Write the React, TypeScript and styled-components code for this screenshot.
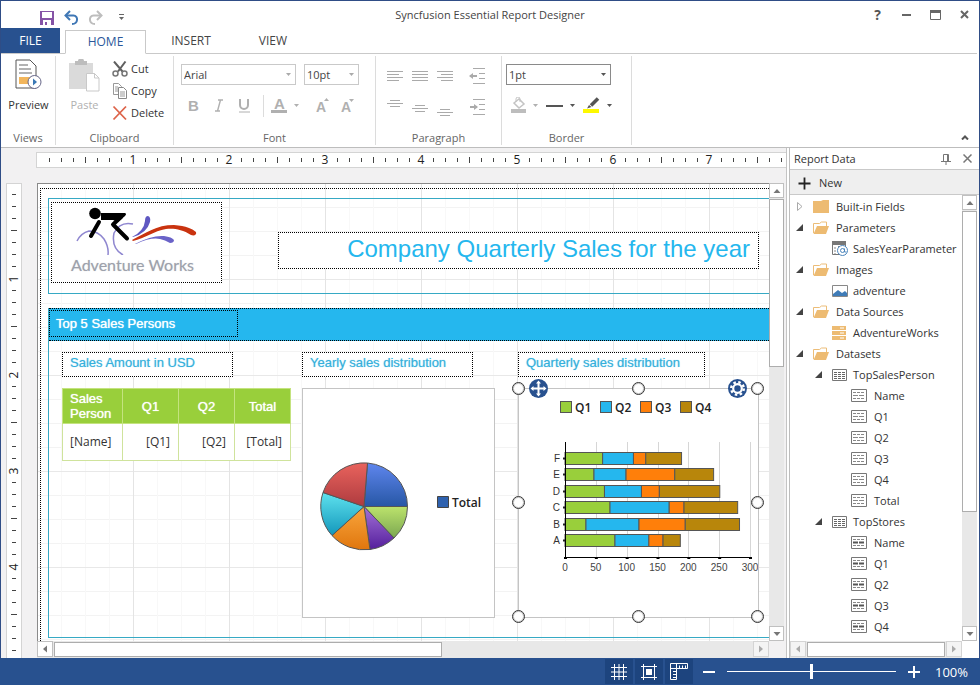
import React, { useLayoutEffect, useRef, useState } from "react";
import styled, { createGlobalStyle, css } from "styled-components";

const UI_FONT = '"Open Sans", "Noto Sans", sans-serif';
const REPORT_FONT = '"Liberation Sans", Arial, sans-serif';

const color = {
  brand: "#28518f",
  brandDark: "#1d447e",
  frame: "#2f4d86",
  line: "#c9c9c9",
  text: "#333333",
  muted: "#666666",
  disabled: "#b0b0b0",
  canvas: "#f2f1f2",
  cyan: "#25b7ee",
  cyanText: "#35b0dc",
  cyanLine: "#36a9c4",
  green: "#99cf3b",
  orange: "#ff7f0a",
  gold: "#b8860b",
};

const GlobalStyle = createGlobalStyle`
  *, *::before, *::after { box-sizing: border-box; }
  body { margin: 0; background: #fff; }
  button, select, input { font: inherit; color: inherit; margin: 0; padding: 0; }
  button { background: none; border: 0; cursor: default; }
  svg { flex: none; }
`;

/* ---------- window frame ---------- */

const Window = styled.div`
  display: flex;
  flex-direction: column;
  height: 100vh;
  border: 1px solid ${color.frame};
  border-bottom: 0;
  background: #fff;
  color: ${color.text};
  font: 11px/16px ${UI_FONT};
`;

const TitleBar = styled.header`
  display: grid;
  grid-template-columns: 1fr auto 1fr;
  align-items: center;
  height: 27px;
`;

const QuickAccess = styled.div`
  display: flex;
  align-items: center;
  gap: 8px;
  padding: 5px 0 0 38px;
`;

const IconButton = styled.button`
  display: flex;
  align-items: center;
  justify-content: center;
  width: 16px;
  height: 16px;
  flex: none;
`;

const WindowTitle = styled.h1`
  margin: 0;
  padding-top: 1px;
  font-size: 11px;
  font-weight: 400;
  line-height: 16px;
  color: #444;
`;

const WindowButtons = styled.div`
  display: flex;
  justify-content: flex-end;
`;

const WindowButton = styled.button`
  display: flex;
  align-items: center;
  justify-content: center;
  width: 29px;
  height: 27px;
  font-size: 14px;
  font-weight: 700;
  color: #555;
`;

/* ---------- ribbon ---------- */

const TabStrip = styled.nav`
  display: flex;
  align-items: flex-end;
  height: 26px;
  margin-right: 2px;
  border-bottom: 1px solid ${color.line};
  font-size: 12px;
`;

const FileTab = styled.button`
  width: 59px;
  height: 25px;
  color: #fff;
  background: ${color.brand};
`;

const Tab = styled.button<{ $active?: boolean; $width: number }>`
  width: ${(p) => p.$width}px;
  height: 24px;
  color: #444;
  ${(p) =>
    p.$active &&
    css`
      margin: 0 0 -1px 5px;
      color: #2b579a;
      background: #fff;
      border: 1px solid ${color.line};
      border-bottom-color: #fff;
    `}
`;

const Ribbon = styled.section`
  display: flex;
  height: 94px;
  padding: 2px 0;
  border-bottom: 1px solid #bdbdbd;
`;

const RibbonGroup = styled.div<{ $width: number }>`
  display: flex;
  flex-direction: column;
  width: ${(p) => p.$width}px;
  border-right: 1px solid #dcdcdc;
`;

const GroupBody = styled.div`
  display: flex;
  flex: 1;
  min-height: 0;
`;

const GroupLabel = styled.div`
  height: 14px;
  line-height: 14px;
  text-align: center;
  color: ${color.muted};
`;

const BigButton = styled.button<{ $width: number }>`
  display: flex;
  flex-direction: column;
  align-items: center;
  gap: 7px;
  width: ${(p) => p.$width}px;
  padding: 3px 0 0 1px;
  line-height: 16px;
  white-space: nowrap;
  &:disabled { color: ${color.disabled}; gap: 5px; }
`;

const CommandList = styled.div`
  display: flex;
  flex-direction: column;
  padding-top: 2px;
`;

const CommandButton = styled.button`
  display: flex;
  align-items: center;
  gap: 3px;
  height: 22px;
`;

const Rows = styled.div`
  display: flex;
  flex-direction: column;
  gap: 10px;
  padding: 8px 0 0 4px;
`;

const FontRows = styled(Rows)`
  padding-left: 7px;
`;

const Row = styled.div<{ $gap?: number }>`
  display: flex;
  align-items: center;
  gap: ${(p) => p.$gap ?? 8}px;
  height: 21px;
`;

const SelectBox = styled.label<{ $width: number; $active?: boolean }>`
  display: flex;
  align-items: center;
  width: ${(p) => p.$width}px;
  height: 21px;
  padding-right: 4px;
  border: 1px solid ${(p) => (p.$active ? "#8a8a8a" : "#c9c9c9")};
  color: ${(p) => (p.$active ? "#555" : "#aaa")};
  select {
    flex: 1;
    min-width: 0;
    height: 19px;
    padding-left: 2px;
    appearance: none;
    border: 0;
    background: transparent;
    color: #444;
  }
`;

const ToolButton = styled.button<{ $width?: number }>`
  display: flex;
  align-items: center;
  justify-content: center;
  width: ${(p) => p.$width ?? 25}px;
  height: 24px;
  flex: none;
  color: ${color.disabled};
`;

const ToolDivider = styled.span`
  width: 1px;
  height: 22px;
  margin: 0 4px 0 7px;
  background: #dcdcdc;
`;

const AlignGrid = styled.div`
  display: grid;
  grid-template-columns: 25px 25px 25px 41px;
  grid-auto-rows: 31px;
  padding: 4px 0 0 6px;
  button { width: auto; height: 31px; }
`;

const RibbonEnd = styled.div`
  display: flex;
  flex: 1;
  align-items: flex-end;
  justify-content: flex-end;
  padding: 0 6px 0 0;
`;

/* ---------- workspace ---------- */

const Workspace = styled.main`
  display: flex;
  flex: 1;
  min-height: 0;
  gap: 2px;
`;

const Designer = styled.section`
  display: flex;
  flex: 1;
  flex-direction: column;
  min-width: 0;
  padding-left: 5px;
  background: ${color.canvas};
  border-right: 1px solid #c4c4c4;
`;

const rulerSkin = css`
  display: flex;
  flex: none;
  overflow: hidden;
  background: #fff;
  border: 1px solid #d4d4d4;
  color: #222;
  font-size: 12px;
`;

const HRulerTrack = styled.div`
  ${rulerSkin}
  height: 16px;
  margin: 4px 0 15px 30px;
  padding-left: 6px;
  border-right: 0;
`;

const VRulerTrack = styled.div`
  ${rulerSkin}
  flex-direction: column;
  width: 16px;
  padding-top: 5px;
  margin-right: 15px;
  border-bottom: 0;
`;

const Tick = styled.span<{ $tall?: boolean }>`
  display: flex;
  flex: none;
  align-items: center;
  justify-content: center;
  &:empty::before {
    content: "";
    width: 1px;
    height: ${(p) => (p.$tall ? 6 : 4)}px;
    background: #444;
  }
`;

const HTick = styled(Tick)`
  width: 12px;
  height: 14px;
`;

const VTick = styled(Tick)`
  width: 14px;
  height: 12px;
  line-height: 12px;
  transform: rotate(-90deg);
`;

const DesignerBody = styled.div`
  display: flex;
  flex: 1;
  min-height: 0;
`;

const Viewport = styled.div`
  display: grid;
  flex: 1;
  min-width: 0;
  grid-template-columns: minmax(0, 1fr) 15px 2px;
  grid-template-rows: minmax(0, 1fr) 17px;
`;

const gridLines = css`
  background-color: #fff;
  background-image: linear-gradient(90deg, #e4e4e4 1px, transparent 1px),
    linear-gradient(#e8e8e8 1px, transparent 1px),
    linear-gradient(90deg, #f8f8f8 1px, transparent 1px),
    linear-gradient(#f3f3f3 1px, transparent 1px);
  background-size: 96px 96px, 96px 96px, 24px 24px, 24px 24px;
  background-position: -1px -1px;
`;

const Page = styled.div`
  overflow: hidden;
  padding: 4px 0 0 2px;
  border-top: 1px solid #8a8a8a;
  border-left: 1px solid #8a8a8a;
  ${gridLines}
`;

const PageMargin = styled.div`
  min-height: 100%;
  padding: 9px 0 0 7px;
  border-top: 1px dotted #000;
  border-left: 1px dotted #000;
`;

const HeaderSection = styled.div`
  position: relative;
  height: 96px;
  margin-bottom: 14px;
  border: 1px solid ${color.cyanLine};
  border-right: 0;
`;

const BodySection = styled.div`
  position: relative;
  height: 330px;
  border: 1px solid ${color.cyanLine};
  border-width: 0 0 1px 1px;
`;

const Band = styled.div`
  height: 33px;
  padding: 1px 0 0;
  background: ${color.cyan};
  border: 1px dotted #000;
  border-right: 0;
  border-left: 0;
`;

const BandTitle = styled.div`
  width: 189px;
  height: 27px;
  padding: 5px 6px;
  border: 1px dotted #000;
  color: #fff;
  font: 13px/15px ${REPORT_FONT};
  text-shadow: 0 0 1px currentColor;
`;

/* Report items carry their own place on the design canvas. */
const ReportItem = styled.div<{ $x: number; $y: number; $w: number; $h: number }>`
  position: absolute;
  left: ${(p) => p.$x}px;
  top: ${(p) => p.$y}px;
  width: ${(p) => p.$w}px;
  height: ${(p) => p.$h}px;
`;

const LogoItem = styled(ReportItem)`
  background: #fff;
  border: 1px dotted #000;
  padding: 2px 0 0 19px;
  color: #9da1ab;
  font: 16px/20px Lato, ${UI_FONT};
  white-space: nowrap;
  text-shadow: 0 0 1px #9da1ab80;
  svg { display: block; }
`;

const TextItem = styled(ReportItem)`
  background: #fff;
  padding: 2px 7px;
  border: 1px dotted #000;
  color: ${color.cyanText};
  font: 13px/15px ${REPORT_FONT};
  text-shadow: 0 0 1px #35b0dc99;
`;

const TitleItem = styled(TextItem)`
  padding: 2px 8px;
  font-size: 24px;
  line-height: 28px;
  text-align: right;
  white-space: nowrap;
  color: ${color.cyan};
  text-shadow: none;
`;

const ChartItem = styled(ReportItem)`
  background: #fff;
  border: 1px solid #c4c4c4;
  svg { display: block; }
`;

const Tablix = styled.table`
  width: 100%;
  height: 100%;
  table-layout: fixed;
  border-collapse: collapse;
  background: #fff;
  font-size: 12px;
  th {
    height: 35px;
    padding: 0 7px;
    border: 1px solid #c4e37f;
    background: ${color.green};
    color: #fff;
    font: 13px/15px ${REPORT_FONT};
    text-shadow: 0 0 1px currentColor;
  }
  th:first-child, td:first-child { text-align: left; }
  th:first-child { width: 60px; }
  td {
    padding: 0 8px 0 7px;
    border: 1px solid #cfe39c;
    text-align: right;
  }
`;

const Handle = styled.i<{ $left: string; $top: string }>`
  position: absolute;
  left: ${(p) => p.$left};
  top: ${(p) => p.$top};
  width: 13px;
  height: 13px;
  margin: -7px 0 0 -7px;
  border: 1px solid #333;
  border-radius: 50%;
  background: #fff;
  box-shadow: inset 0 0 0 1px #3334;
`;

const Adorner = styled.button<{ $left: string }>`
  position: absolute;
  left: ${(p) => p.$left};
  top: -10px;
  width: 19px;
  height: 19px;
`;

/* ---------- scroll bars ---------- */

const ScrollBar = styled.div<{ $vertical?: boolean }>`
  display: flex;
  flex-direction: ${(p) => (p.$vertical ? "column" : "row")};
  background: #e8e8e8;
`;

const ScrollButton = styled.button`
  display: flex;
  flex: none;
  align-items: center;
  justify-content: center;
  width: 16px;
  height: 16px;
  background: #fff;
  border: 1px solid #c0c0c0;
  color: #777;
  &:disabled { color: #aaa; background: #f4f4f4; border-color: #d4d4d4; }
`;

const VScrollButton = styled(ScrollButton)`
  width: auto;
  height: 15px;
`;

const Thumb = styled.div<{ $share: number }>`
  flex: ${(p) => p.$share} 0 0;
  margin: 1px;
  background: #fff;
  border: 1px solid #adadad;
`;

const VThumb = styled(Thumb)`
  margin: 1px 0;
`;

const Remaining = styled.div<{ $share: number }>`
  flex: ${(p) => p.$share} 0 0;
`;

/* ---------- report data panel ---------- */

const Panel = styled.aside`
  display: flex;
  flex: none;
  flex-direction: column;
  width: 190px;
  border-left: 1px solid #bdbdbd;
`;

const PanelHeader = styled.div`
  display: flex;
  align-items: center;
  height: 22px;
  padding: 0 4px;
  border-bottom: 1px solid ${color.line};
  gap: 5px;
  h2 {
    flex: 1;
    margin: 0;
    font-size: 11px;
    font-weight: 400;
  }
`;

const PanelToolbar = styled.div`
  height: 25px;
  padding: 5px 8px 3px;
  background: #efefef;
  border-bottom: 1px solid ${color.line};
`;

const NewButton = styled.button`
  display: flex;
  align-items: center;
  gap: 8px;
  height: 16px;
`;

const PanelBody = styled.div`
  display: grid;
  flex: 1;
  min-height: 0;
  grid-template-columns: minmax(0, 1fr) 15px 2px;
  grid-template-rows: minmax(0, 1fr) 17px;
`;

const Tree = styled.ul`
  margin: 0;
  padding: 1px 0 0;
  overflow: hidden;
  list-style: none;
`;

const TreeRow = styled.li<{ $level: number }>`
  display: flex;
  align-items: center;
  gap: ${(p) => (p.$level === 1 ? 5 : 7)}px;
  height: 21px;
  padding-left: ${(p) => 4 + p.$level * 19}px;
  white-space: nowrap;
`;

const TreeGlyphs = styled.span`
  display: flex;
  align-items: center;
`;

const Expander = styled.span`
  display: flex;
  width: 19px;
  padding-left: 2px;
  flex: none;
`;

const TreeIcon = styled.span`
  display: flex;
  width: 16px;
  flex: none;
`;

/* ---------- status bar ---------- */

const StatusBar = styled.footer`
  display: flex;
  flex: none;
  align-items: center;
  justify-content: flex-end;
  height: 27px;
  margin: 0 -1px;
  padding-right: 11px;
  background: ${color.brand};
  color: #fff;
  font-size: 13px;
`;

const StatusToggles = styled.div`
  display: flex;
  gap: 2px;
  margin-right: 1px;
`;

const StatusToggle = styled.button`
  display: flex;
  align-items: center;
  justify-content: center;
  width: 28px;
  height: 25px;
  background: ${color.brandDark};
`;

const ZoomButton = styled.button`
  display: flex;
  align-items: center;
  justify-content: center;
  width: 12px;
  height: 16px;
  margin: 0 9px;
`;

const ZoomSlider = styled.input`
  width: 169px;
  height: 16px;
  margin: 0 3px;
  appearance: none;
  background: linear-gradient(#fff, #fff) center / 100% 1px no-repeat;
  &::-webkit-slider-thumb {
    appearance: none;
    width: 3px;
    height: 15px;
    background: #fff;
  }
`;

const ZoomValue = styled.output`
  min-width: 34px;
  margin-left: 6px;
`;

/* ---------- icons ---------- */

const Caret = () => (
  <svg width="5" height="3" viewBox="0 0 5 3" aria-hidden="true">
    <path d="M0 0h5L2.500 3z" fill="currentColor" />
  </svg>
);

const DarkCaret = () => (
  <svg width="5" height="3" viewBox="0 0 5 3" aria-hidden="true">
    <path d="M0 0h5L2.500 3z" fill="#555" />
  </svg>
);

const Arrow = ({ turn }: { turn: number }) => (
  <svg width="8" height="8" viewBox="0 0 8 8" aria-hidden="true">
    <path d="M0.500 6h7L4 2z" fill="currentColor" transform={`rotate(${turn} 4 4)`} />
  </svg>
);

const SaveIcon = () => (
  <svg width="15" height="15" viewBox="0 0 15 15">
    <path d="M0 1h14v14H0z" fill="#8553a6" />
    <path d="M2 2h10v6H2zM3 10h8v5H3z" fill="#fff" />
    <path d="M5 12h2v3H5z" fill="#8553a6" />
  </svg>
);

const UndoIcon = ({ stroke, flip }: { stroke: string; flip?: boolean }) => (
  <svg width="15" height="15" viewBox="0 0 15 15">
    <g fill="none" stroke={stroke} strokeWidth="2" transform={flip ? "matrix(-1 0 0 1 15 0)" : undefined}>
      <path d="M2 5.500h7.500c5 0 5 8.500-1.500 8.500" />
      <path d="M6 1L1.500 5.500 6 10" />
    </g>
  </svg>
);

const PreviewIcon = () => (
  <svg width="27" height="31" viewBox="0 0 27 31">
    <path d="M1 1h14l6 6v22H1z" fill="#fff" stroke="#555" />
    <path d="M4 6h9M4 10h12M4 14h13" stroke="#999" strokeWidth="1.500" />
    <path d="M4 18h13v7H4z" fill="#f2b65c" />
    <circle cx="19.500" cy="23" r="6.500" fill="#fff" stroke="#668" />
    <path d="M18 19.500v7l4-3.500z" fill="#3a78b5" />
  </svg>
);

const PasteIcon = () => (
  <svg width="31" height="33" viewBox="0 0 31 33">
    <path d="M0 4h24v26H0z" fill="#dadada" />
    <path d="M6 2h3a3 2.500 0 0 1 6 0h3v4H6z" fill="#bdbdbd" />
    <path d="M17.500 14.500h8l4.500 4.500v13H17.500z" fill="#fff" stroke="#c9c9c9" />
    <path d="M25.500 14.500V19H30" fill="none" stroke="#c9c9c9" />
  </svg>
);

const CutIcon = () => (
  <svg width="16" height="16" viewBox="0 0 16 16">
    <path d="M2 0.500l8.500 10M13.500 0.500L6 10.500" stroke="#606060" strokeWidth="2" />
    <circle cx="3.500" cy="12.500" r="2.500" fill="none" stroke="#777" strokeWidth="1.500" />
    <circle cx="12.500" cy="12.500" r="2.500" fill="none" stroke="#777" strokeWidth="1.500" />
  </svg>
);

const CopyIcon = () => (
  <svg width="16" height="16" viewBox="0 0 16 16">
    <path d="M1.500 0.500h5l3 3v8h-8z" fill="#fff" stroke="#999" />
    <path d="M3 4h3M3 6h3M3 8h3" stroke="#999" />
    <path d="M6.500 4.500h5l3 3v8h-8z" fill="#fff" stroke="#888" />
    <path d="M8 9h5M8 11h5M8 13h5" stroke="#999" />
  </svg>
);

const DeleteIcon = () => (
  <svg width="16" height="16" viewBox="0 0 16 16">
    <path d="M1.500 1.500l12.500 13M14 1.500L1.500 14.500" stroke="#dd6349" strokeWidth="1.800" />
  </svg>
);

const letter = { fontFamily: REPORT_FONT, fill: "currentColor" } as const;

const BoldIcon = () => (
  <svg width="14" height="20" viewBox="0 0 14 20">
    <text x="1" y="15" fontSize="15" fontWeight="700" {...letter}>B</text>
  </svg>
);
const ItalicIcon = () => (
  <svg width="14" height="16" viewBox="0 0 14 16">
    <path d="M6 2h5M3 13h5M8.500 2l-3 11" stroke="currentColor" fill="none" strokeWidth="1.400" />
  </svg>
);
const UnderlineIcon = () => (
  <svg width="14" height="16" viewBox="0 0 14 16">
    <path d="M3 1v6a4 4 0 0 0 8 0V1" fill="none" stroke="currentColor" strokeWidth="2" />
    <path d="M2 14h11" stroke="currentColor" />
  </svg>
);
const FontColorIcon = () => (
  <svg width="17" height="24" viewBox="0 0 17 24">
    <text x="3" y="15" fontSize="15" fontWeight="700" {...letter}>A</text>
    <path d="M0 16h16v3H0z" fill="currentColor" />
  </svg>
);
const FontSizeIcon = ({ grow }: { grow?: boolean }) => (
  <svg width="14" height="22" viewBox="0 0 14 22">
    <text x="0" y="17" fontSize="14" fontWeight="700" {...letter}>A</text>
    <path d={grow ? "M8 4h5l-2.500 3z" : "M8 6h5L10.500 3z"} fill="currentColor" />
  </svg>
);

const LinesIcon = ({ d, shift = 0 }: { d: string; shift?: number }) => (
  <svg width="16" height="24" viewBox="0 -2 16 24">
    <path d={d} stroke="#aaaaaa" fill="none" transform={`translate(0 ${shift})`} />
  </svg>
);

const IndentIcon = ({ out }: { out?: boolean }) => (
  <svg width="17" height="18" viewBox="0 0 17 18">
    <path d="M4 1.500h12M10 6.500h6M10 11.500h6M4 16.500h12" stroke="#aaa" />
    <path d="M1 9h7" stroke="#aaa" strokeWidth="2" />
    <path d={out ? "M0 9l4-3v6z" : "M9 9L5 6v6z"} fill="#aaa" />
  </svg>
);

const FillIcon = () => (
  <svg width="17" height="17" viewBox="0 0 17 17">
    <path d="M4 6l5-4 5 5-5 4z" fill="none" stroke="#c4c4c4" strokeWidth="1.500" />
    <path d="M6 5V2a2 2 0 0 1 4 0v3" fill="none" stroke="#c4c4c4" />
    <path d="M1 12h15v4H1z" fill="#bdbdbd" />
  </svg>
);
const PenIcon = () => (
  <svg width="17" height="17" viewBox="0 0 17 17">
    <path d="M8 8.500l7-7" stroke="#555" strokeWidth="3.500" />
    <path d="M4 11.500l2-3.500 2.500 2z" fill="#555" />
    <path d="M0 12h16v4H0z" fill="#fdf900" />
  </svg>
);

const ClosedFolder = () => (
  <svg width="16" height="13" viewBox="0 0 16 13">
    <path d="M0 1h8l2-1h6v13H0z" fill="#edbb72" />
  </svg>
);
const OpenFolder = () => (
  <svg width="16" height="13" viewBox="0 0 16 13">
    <path d="M0.500 12V2.500h6l2-1.500h5v4" fill="#fff" stroke="#ecbd78" />
    <path d="M4 5h12l-3 8H0.500z" fill="#edbb72" />
  </svg>
);
const ParameterIcon = () => (
  <svg width="16" height="15" viewBox="0 0 16 15">
    <path d="M0.500 0.500h13v13H0.500z" fill="#fff" stroke="#777" />
    <path d="M0 0h14v4H0z" fill="#777" />
    <path d="M3 6v7M6 5.500h8" stroke="#888" strokeDasharray="2 1" />
    <circle cx="10.500" cy="9.500" r="5" fill="#fff" stroke="#4d86bd" />
    <circle cx="10.500" cy="9.500" r="2" fill="none" stroke="#4d86bd" />
    <path d="M12.500 7.500v3.500h2" fill="none" stroke="#4d86bd" />
  </svg>
);
const ImageIcon = () => (
  <svg width="16" height="12" viewBox="0 0 16 12">
    <path d="M0.500 0.500h15v11H0.500z" fill="#fff" stroke="#888" />
    <path d="M1 9l5-4 4 3 3-2 2 2v3H1z" fill="#3f7cb8" />
  </svg>
);
const SourceIcon = () => (
  <svg width="16" height="14" viewBox="0 0 16 14">
    <path d="M0 0h14v4H0zM0 5h14v4H0zM0 10h14v4H0z" fill="#edbb72" />
    <path d="M8 2h4M8 7h4M8 12h4" stroke="#fff" />
  </svg>
);
const DatasetIcon = () => (
  <svg width="16" height="12" viewBox="0 0 16 12">
    <path d="M0.500 0.500h14v11H0.500z" fill="#fff" stroke="#777" />
    <path d="M2 3.500h3M6 3.500h3M10 3.500h3M2 5.500h3M6 5.500h3M10 5.500h3M2 7.500h3M6 7.500h3M10 7.500h3M2 9.500h3M6 9.500h3M10 9.500h3" stroke="#666" />
  </svg>
);
const FieldIcon = ({ bold }: { bold?: boolean }) => (
  <svg width="16" height="13" viewBox="0 0 16 13">
    <path d="M0.500 0.500h15v12H0.500z" fill="#fff" stroke="#777" />
    <path d="M2 3.500h12M2 9.500h12" stroke="#888" strokeDasharray="3 1" />
    <path d="M2 6.500h11" stroke={bold ? "#555" : "#888"} strokeWidth={bold ? 2 : 1} strokeDasharray="5 1" />
  </svg>
);

const Collapse = () => (
  <svg width="7" height="7" viewBox="0 0 7 7">
    <path d="M7 0v7H0z" fill="#444" />
  </svg>
);
const Expand = () => (
  <svg width="7" height="9" viewBox="0 0 7 9">
    <path d="M1.500 0.500v8L6 4.500z" fill="#fff" stroke="#aaa" />
  </svg>
);

const CyclistLogo = () => (
  <svg width="128" height="50" viewBox="71 206 128 50" aria-hidden="true">
    <g fill="none" stroke="#8f87d0" strokeWidth="1.500">
      <path d="M77 242q4-8 12-10 9 0 15 8 5 8 4 16" />
      <path d="M133 225q-13-3-19 9-3 15 9 22" />
    </g>
    <path d="M132 238q12-6 13-16 0-5 3-5 3 1 2 6-3 11-17 15z" fill="#5f58c2" />
    <path d="M135 245q17-9 29-8 8 1 10 4 0 3-4 3-5-3-10-4-9-2-24 5z" fill="#6a63c8" />
    <path d="M132 241c14-7 24-15 42-15 12 1 19 4 22 7 1 3-2 4-5 3-9-6-18-7-25-6-12 2-21 9-33 12z" fill="#c9330f" />
    <circle cx="95" cy="214.500" r="5.800" fill="#000" />
    <path d="M101 214h24q2 1 0 3l-7 6-5-2h-12z" fill="#000" />
    <g fill="none" stroke="#000" strokeLinecap="round" strokeLinejoin="round">
      <path d="M121 218l-8 7.500 14 14" strokeWidth="4" />
      <path d="M99 223l-8 14" strokeWidth="4" />
    </g>
  </svg>
);

/* ---------- charts ---------- */

const slices = [
  { id: "blue", from: [3.5, -43.5], to: [43.5, 0], top: "#5f86ee", bottom: "#2757a5" },
  { id: "green", from: [43.5, 0], to: [30, 31.5], top: "#bce36c", bottom: "#7ba751" },
  { id: "purple", from: [30, 31.5], to: [6, 43], top: "#a372d8", bottom: "#551f9c" },
  { id: "orange", from: [6, 43], to: [-32, 29], top: "#f9a63d", bottom: "#e0760d" },
  { id: "cyan", from: [-32, 29], to: [-41, -14], top: "#5fe2ee", bottom: "#1397bb" },
  { id: "red", from: [-41, -14], to: [3.5, -43.5], top: "#e9635d", bottom: "#ae3b3f" },
];

const PieChart = () => (
  <svg width="191" height="228" viewBox="303 389 191 228" role="img" aria-label="Yearly sales distribution">
    <defs>
      {slices.map((s) => (
        <linearGradient key={s.id} id={`slice-${s.id}`} x1="0" y1="0" x2="0" y2="1">
          <stop offset="0" stopColor={s.top} />
          <stop offset="1" stopColor={s.bottom} />
        </linearGradient>
      ))}
    </defs>
    <g transform="translate(364 506.500)" stroke="#555" strokeLinejoin="round">
      {slices.map((s) => (
        <path
          key={s.id}
          d={`M0 0L${s.from.join(" ")}A43.500 43.500 0 0 1 ${s.to.join(" ")}Z`}
          fill={`url(#slice-${s.id})`}
        />
      ))}
    </g>
    <path d="M437.500 496.500h11v11h-11z" fill="#2f62af" stroke="#444" />
    <text x="452" y="507" fontFamily={UI_FONT} fontSize="12" fontWeight="600" fill="#222">Total</text>
  </svg>
);

const quarters = [
  { label: "Q1", fill: color.green },
  { label: "Q2", fill: color.cyan },
  { label: "Q3", fill: color.orange },
  { label: "Q4", fill: color.gold },
];

const bars = [
  { label: "F", values: [61, 50, 20, 58] },
  { label: "E", values: [47, 52, 79, 63] },
  { label: "D", values: [64, 60, 29, 98] },
  { label: "C", values: [73, 96, 24, 87] },
  { label: "B", values: [34, 86, 75, 88] },
  { label: "A", values: [81, 55, 23, 28] },
];

const BAR_SCALE = 185 / 300;

const BarChart = () => (
  <svg width="239" height="228" viewBox="519 389 239 228" role="img" aria-label="Quarterly sales distribution">
    {quarters.map((q, i) => (
      <g key={q.label}>
        <rect x={560.5 + i * 40} y="401.500" width="11" height="11" fill={q.fill} stroke="#555" />
        <text x={575 + i * 40} y="412" fontFamily={UI_FONT} fontSize="12" fontWeight="600" fill="#222">
          {q.label}
        </text>
      </g>
    ))}
    {[50, 100, 150, 200, 250, 300].map((v) => (
      <path key={v} d={`M${Math.round(565 + v * BAR_SCALE) + 0.5} 442V557`} stroke="#d6d6d6" />
    ))}
    {bars.map((bar, row) => {
      const y = Math.round(452 + row * 16.4) + 0.5;
      let total = 0;
      return (
        <g key={bar.label}>
          {bar.values.map((value, i) => {
            const x = 565 + total * BAR_SCALE;
            total += value;
            return (
              <rect key={i} x={x} y={y} width={value * BAR_SCALE} height="12" fill={quarters[i].fill} stroke="#555" />
            );
          })}
          <path d={`M563 ${y + 6}h3`} stroke="#222" strokeWidth="2" />
          <text x="560" y={y + 9.5} textAnchor="end" fontFamily={REPORT_FONT} fontSize="10" fill="#333">
            {bar.label}
          </text>
        </g>
      );
    })}
    <path d="M565.500 442V557.500H750" fill="none" stroke="#000" />
    {[0, 50, 100, 150, 200, 250, 300].map((v) => (
      <g key={v}>
        <path d={`M${564 + v * BAR_SCALE} 558h3`} stroke="#000" strokeWidth="2" />
        <text x={565 + v * BAR_SCALE} y="571" textAnchor="middle" fontFamily={REPORT_FONT} fontSize="10" fill="#444">
          {v}
        </text>
      </g>
    ))}
  </svg>
);

const MoveIcon = () => (
  <svg width="19" height="19" viewBox="0 0 19 19">
    <circle cx="9.500" cy="9.500" r="9.500" fill={color.brand} />
    <path d="M9.500 3v13M3 9.500h13" stroke="#fff" strokeWidth="2" />
    <path d="M9.500 1.500l2.500 3H7zM9.500 17.500l2.500-3H7zM1.500 9.500l3-2.500v5zM17.500 9.500l-3-2.500v5z" fill="#fff" />
  </svg>
);
const GearIcon = () => (
  <svg width="19" height="19" viewBox="0 0 19 19">
    <circle cx="9.500" cy="9.500" r="9.500" fill={color.brand} />
    <circle cx="9.500" cy="9.500" r="6.300" fill="none" stroke="#fff" strokeWidth="2.400" strokeDasharray="2.500 2.448" />
    <circle cx="9.500" cy="9.500" r="4.300" fill="none" stroke="#fff" strokeWidth="2.200" />
  </svg>
);

/* ---------- data ---------- */

type TreeNode = {
  label: string;
  level: number;
  state?: "open" | "closed";
  icon: React.ReactNode;
};

const field = (label: string, bold = false): TreeNode => ({
  label,
  level: 2,
  icon: <FieldIcon bold={bold} />,
});

const treeNodes: TreeNode[] = [
  { label: "Built-in Fields", level: 0, state: "closed", icon: <ClosedFolder /> },
  { label: "Parameters", level: 0, state: "open", icon: <OpenFolder /> },
  { label: "SalesYearParameter", level: 1, icon: <ParameterIcon /> },
  { label: "Images", level: 0, state: "open", icon: <OpenFolder /> },
  { label: "adventure", level: 1, icon: <ImageIcon /> },
  { label: "Data Sources", level: 0, state: "open", icon: <OpenFolder /> },
  { label: "AdventureWorks", level: 1, icon: <SourceIcon /> },
  { label: "Datasets", level: 0, state: "open", icon: <OpenFolder /> },
  { label: "TopSalesPerson", level: 1, state: "open", icon: <DatasetIcon /> },
  ...["Name", "Q1", "Q2", "Q3", "Q4", "Total"].map((l) => field(l)),
  { label: "TopStores", level: 1, state: "open", icon: <DatasetIcon /> },
  ...["Name", "Q1", "Q2", "Q3", "Q4"].map((l) => field(l, true)),
];

const handles: [string, string][] = [
  ["0%", "0%"], ["50%", "0%"], ["100%", "0%"],
  ["0%", "50%"], ["100%", "50%"],
  ["0%", "100%"], ["50%", "100%"], ["100%", "100%"],
];

/* ---------- rulers ---------- */

const TICK_SPACING = 12;

const Ruler = ({ vertical }: { vertical?: boolean }) => {
  const track = useRef<HTMLDivElement>(null);
  const [count, setCount] = useState(0);

  useLayoutEffect(() => {
    const el = track.current;
    if (!el) return;
    const measure = () => {
      const length = vertical ? el.clientHeight : el.clientWidth;
      setCount(Math.max(0, Math.floor(length / TICK_SPACING)));
    };
    measure();
    const observer = new ResizeObserver(measure);
    observer.observe(el);
    return () => observer.disconnect();
  }, [vertical]);

  const Track = vertical ? VRulerTrack : HRulerTrack;
  const Mark = vertical ? VTick : HTick;
  return (
    <Track ref={track}>
      {Array.from({ length: count }, (_, i) => i + 1).map((n) => (
        <Mark key={n} $tall={n % 8 === 4}>{n % 8 === 0 ? n / 8 : null}</Mark>
      ))}
    </Track>
  );
};

/* ---------- composition ---------- */

const HomeRibbon = () => (
  <Ribbon aria-label="Home">
    <RibbonGroup $width={55}>
      <GroupBody>
        <BigButton $width={55}><PreviewIcon />Preview</BigButton>
      </GroupBody>
      <GroupLabel>Views</GroupLabel>
    </RibbonGroup>
    <RibbonGroup $width={118}>
      <GroupBody>
        <BigButton $width={56} disabled><PasteIcon />Paste</BigButton>
        <CommandList>
          <CommandButton><CutIcon />Cut</CommandButton>
          <CommandButton><CopyIcon />Copy</CommandButton>
          <CommandButton><DeleteIcon />Delete</CommandButton>
        </CommandList>
      </GroupBody>
      <GroupLabel>Clipboard</GroupLabel>
    </RibbonGroup>
    <RibbonGroup $width={202}>
      <GroupBody>
        <FontRows>
          <Row>
            <SelectBox $width={115}>
              <select aria-label="Font family"><option>Arial</option></select>
              <Caret />
            </SelectBox>
            <SelectBox $width={55}>
              <select aria-label="Font size"><option>10pt</option></select>
              <Caret />
            </SelectBox>
          </Row>
          <Row $gap={0}>
            <ToolButton $width={25} aria-label="Bold"><BoldIcon /></ToolButton>
            <ToolButton aria-label="Italic"><ItalicIcon /></ToolButton>
            <ToolButton aria-label="Underline"><UnderlineIcon /></ToolButton>
            <ToolDivider />
            <ToolButton $width={23} aria-label="Font color"><FontColorIcon /></ToolButton>
            <ToolButton $width={11} aria-label="Font color options"><Caret /></ToolButton>
            <ToolButton $width={41} aria-label="Shrink font"><FontSizeIcon /></ToolButton>
            <ToolButton $width={10} aria-label="Grow font"><FontSizeIcon grow /></ToolButton>
          </Row>
        </FontRows>
      </GroupBody>
      <GroupLabel>Font</GroupLabel>
    </RibbonGroup>
    <RibbonGroup $width={126}>
      <GroupBody>
        <AlignGrid>
          <ToolButton aria-label="Align left"><LinesIcon d="M0 5.500h16M0 8.500h12M0 11.500h16M0 14.500h12" /></ToolButton>
          <ToolButton aria-label="Align center"><LinesIcon d="M0 5.500h16M0 8.500h16M0 11.500h16M0 14.500h16" /></ToolButton>
          <ToolButton aria-label="Align right"><LinesIcon d="M0 5.500h16M4 8.500h12M0 11.500h16M4 14.500h12" /></ToolButton>
          <ToolButton aria-label="Decrease indent"><IndentIcon out /></ToolButton>
          <ToolButton aria-label="Align top"><LinesIcon d="M3 5.500h10M0 8.500h16M3 11.500h10" shift={-2} /></ToolButton>
          <ToolButton aria-label="Align middle"><LinesIcon d="M3 5.500h10M0 8.500h16M3 11.500h10" shift={3} /></ToolButton>
          <ToolButton aria-label="Align bottom"><LinesIcon d="M3 5.500h10M0 8.500h16M3 11.500h10" shift={7} /></ToolButton>
          <ToolButton aria-label="Increase indent"><IndentIcon /></ToolButton>
        </AlignGrid>
      </GroupBody>
      <GroupLabel>Paragraph</GroupLabel>
    </RibbonGroup>
    <RibbonGroup $width={130}>
      <GroupBody>
        <Rows>
          <Row>
            <SelectBox $width={105} $active>
              <select aria-label="Border width"><option>1pt</option></select>
              <Caret />
            </SelectBox>
          </Row>
          <Row $gap={0}>
            <ToolButton $width={24} aria-label="Background color"><FillIcon /></ToolButton>
            <ToolButton $width={10} aria-label="Background color options"><Caret /></ToolButton>
            <ToolButton $width={28} aria-label="Border style">
              <svg width="17" height="2"><path d="M0 1h17" stroke="#555" strokeWidth="2" /></svg>
            </ToolButton>
            <ToolButton $width={8} aria-label="Border style options"><DarkCaret /></ToolButton>
            <ToolButton $width={30} aria-label="Border color"><PenIcon /></ToolButton>
            <ToolButton $width={6} aria-label="Border color options"><DarkCaret /></ToolButton>
          </Row>
        </Rows>
      </GroupBody>
      <GroupLabel>Border</GroupLabel>
    </RibbonGroup>
    <RibbonEnd>
      <IconButton aria-label="Collapse ribbon">
        <svg width="8" height="5" viewBox="0 0 8 5"><path d="M1 4.500l3-3 3 3" fill="none" stroke="#555" strokeWidth="2" /></svg>
      </IconButton>
    </RibbonEnd>
  </Ribbon>
);

const ReportCanvas = () => (
  <Page>
    <PageMargin>
      <HeaderSection>
        <LogoItem $x={2} $y={3} $w={171} $h={81}>
          <CyclistLogo />
          Adventure Works
        </LogoItem>
        <TitleItem $x={229} $y={33} $w={481} $h={37}>Company Quarterly Sales for the year</TitleItem>
      </HeaderSection>
      <BodySection>
        <Band><BandTitle>Top 5 Sales Persons</BandTitle></Band>
        <TextItem $x={13} $y={44} $w={171} $h={25}>Sales Amount in USD</TextItem>
        <TextItem $x={253} $y={44} $w={171} $h={25}>Yearly sales distribution</TextItem>
        <TextItem $x={469} $y={44} $w={187} $h={25}>Quarterly sales distribution</TextItem>
        <ReportItem $x={13} $y={80} $w={229} $h={73}>
          <Tablix>
            <thead>
              <tr><th>Sales Person</th><th>Q1</th><th>Q2</th><th>Total</th></tr>
            </thead>
            <tbody>
              <tr><td>[Name]</td><td>[Q1]</td><td>[Q2]</td><td>[Total]</td></tr>
            </tbody>
          </Tablix>
        </ReportItem>
        <ChartItem $x={253} $y={80} $w={193} $h={230}><PieChart /></ChartItem>
        <ChartItem $x={469} $y={80} $w={241} $h={230}>
          <BarChart />
          {handles.map(([left, top]) => (
            <Handle key={left + top} $left={left} $top={top} />
          ))}
          <Adorner $left="10px" aria-label="Move chart"><MoveIcon /></Adorner>
          <Adorner $left="209px" aria-label="Chart settings"><GearIcon /></Adorner>
        </ChartItem>
      </BodySection>
    </PageMargin>
  </Page>
);

const ReportDataPanel = () => (
  <Panel>
    <PanelHeader>
      <h2>Report Data</h2>
      <IconButton aria-label="Pin panel">
        <svg width="12" height="12" viewBox="0 0 12 12">
          <path d="M3.500 8V1.500h5V8M7.500 2v6M1 8.500h10M6 9v3" fill="none" stroke="#777" />
        </svg>
      </IconButton>
      <IconButton aria-label="Close panel">
        <svg width="9" height="9" viewBox="0 0 9 9"><path d="M0.500 0.500l8 8M8.500 0.500l-8 8" stroke="#777" strokeWidth="1.500" /></svg>
      </IconButton>
    </PanelHeader>
    <PanelToolbar>
      <NewButton>
        <svg width="13" height="13" viewBox="0 0 13 13"><path d="M6.500 0.500v12M0.500 6.500h12" stroke="#222" strokeWidth="1.800" /></svg>
        New
      </NewButton>
    </PanelToolbar>
    <PanelBody>
      <Tree aria-label="Report data">
        {treeNodes.map((node, i) => (
          <TreeRow key={i} $level={node.level}>
            <TreeGlyphs>
              <Expander>{node.state === "open" ? <Collapse /> : node.state === "closed" ? <Expand /> : null}</Expander>
              <TreeIcon>{node.icon}</TreeIcon>
            </TreeGlyphs>
            {node.label}
          </TreeRow>
        ))}
      </Tree>
      <ScrollBar $vertical>
        <VScrollButton aria-label="Scroll up"><Arrow turn={0} /></VScrollButton>
        <VThumb $share={300} />
        <Remaining $share={113} />
        <VScrollButton aria-label="Scroll down"><Arrow turn={180} /></VScrollButton>
      </ScrollBar>
      <span />
      <ScrollBar>
        <ScrollButton aria-label="Scroll left" disabled><Arrow turn={-90} /></ScrollButton>
        <Thumb $share={1} />
        <ScrollButton aria-label="Scroll right" disabled><Arrow turn={90} /></ScrollButton>
      </ScrollBar>
    </PanelBody>
  </Panel>
);

export default function App() {
  return (
    <>
      <GlobalStyle />
      <Window>
        <TitleBar>
          <QuickAccess>
            <IconButton aria-label="Save"><SaveIcon /></IconButton>
            <IconButton aria-label="Undo"><UndoIcon stroke="#3f77b5" /></IconButton>
            <IconButton aria-label="Redo"><UndoIcon stroke="#bdbdbd" flip /></IconButton>
            <IconButton aria-label="Customize toolbar">
              <svg width="16" height="6" viewBox="0 0 16 6"><path d="M8 0.500h5" stroke="#666" /><path d="M8 3h5l-2.500 3z" fill="#666" /></svg>
            </IconButton>
          </QuickAccess>
          <WindowTitle>Syncfusion Essential Report Designer</WindowTitle>
          <WindowButtons>
            <WindowButton aria-label="Help">?</WindowButton>
            <WindowButton aria-label="Minimize">
              <svg width="9" height="2"><path d="M0 1h9" stroke="#666" strokeWidth="2" /></svg>
            </WindowButton>
            <WindowButton aria-label="Maximize">
              <svg width="11" height="10"><path d="M0.500 0.500h10v9H0.500z" fill="none" stroke="#666" /><path d="M0 1.500h11" stroke="#666" strokeWidth="3" /></svg>
            </WindowButton>
            <WindowButton aria-label="Close">
              <svg width="9" height="9"><path d="M1 1l7 7M8 1L1 8" stroke="#666" strokeWidth="2" /></svg>
            </WindowButton>
          </WindowButtons>
        </TitleBar>
        <TabStrip>
          <FileTab>FILE</FileTab>
          <Tab $active $width={81}>HOME</Tab>
          <Tab $width={90}>INSERT</Tab>
          <Tab $width={74}>VIEW</Tab>
        </TabStrip>
        <HomeRibbon />
        <Workspace>
          <Designer>
            <Ruler />
            <DesignerBody>
              <Ruler vertical />
              <Viewport>
                <ReportCanvas />
                <ScrollBar $vertical>
                  <VScrollButton aria-label="Scroll up"><Arrow turn={0} /></VScrollButton>
                  <VThumb $share={167} />
                  <Remaining $share={259} />
                  <VScrollButton aria-label="Scroll down"><Arrow turn={180} /></VScrollButton>
                </ScrollBar>
                <span />
                <ScrollBar>
                  <ScrollButton aria-label="Scroll left"><Arrow turn={-90} /></ScrollButton>
                  <Thumb $share={388} />
                  <Remaining $share={312} />
                  <ScrollButton aria-label="Scroll right" disabled><Arrow turn={90} /></ScrollButton>
                </ScrollBar>
              </Viewport>
            </DesignerBody>
          </Designer>
          <ReportDataPanel />
        </Workspace>
        <StatusBar>
          <StatusToggles>
            <StatusToggle aria-label="Show grid" aria-pressed="true">
              <svg width="16" height="16"><path d="M3.500 0v16M8 0v16M12.500 0v16M0 3.500h16M0 8h16M0 12.500h16" stroke="#fff" /></svg>
            </StatusToggle>
            <StatusToggle aria-label="Snap to grid" aria-pressed="true">
              <svg width="16" height="16"><path d="M2.500 0v16M13.500 0v16M0 2.500h16M0 13.500h16" stroke="#fff" /><path d="M5 5h6v6H5z" fill="#fff" /></svg>
            </StatusToggle>
            <StatusToggle aria-label="Show rulers" aria-pressed="true">
              <svg width="18" height="17"><path d="M0.500 0.500h17v5h-11v11h-6zM9.500 5V2.500M12.500 5V2.500M15.500 5V2.500M6 8.500H3M6 11.500H3M6 14.500H3M0.500 5.500h6v-5" fill="none" stroke="#fff" /></svg>
            </StatusToggle>
          </StatusToggles>
          <ZoomButton aria-label="Zoom out">
            <svg width="12" height="2"><path d="M0 1h12" stroke="#fff" strokeWidth="2" /></svg>
          </ZoomButton>
          <ZoomSlider type="range" min={0} max={200} defaultValue={100} aria-label="Zoom" />
          <ZoomButton aria-label="Zoom in">
            <svg width="12" height="12"><path d="M0 6h12M6 0v12" stroke="#fff" strokeWidth="2" /></svg>
          </ZoomButton>
          <ZoomValue>100%</ZoomValue>
        </StatusBar>
      </Window>
    </>
  );
}
